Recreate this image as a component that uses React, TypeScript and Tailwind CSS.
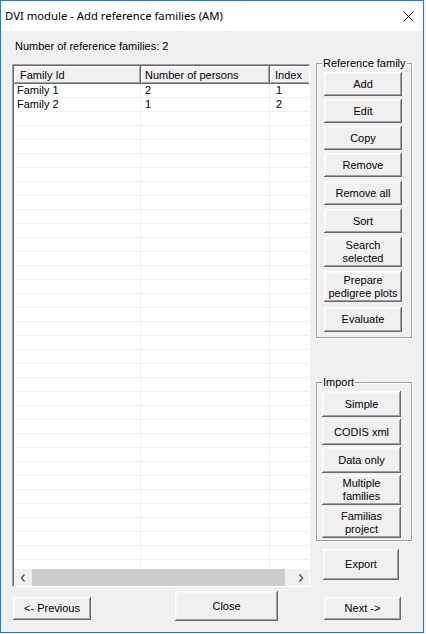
import type { ReactNode } from 'react';

const families = [
  { id: 'Family 1', persons: '2', index: '1' },
  { id: 'Family 2', persons: '1', index: '2' },
];

const emptyRows = Array.from({ length: 34 }, (_, i) => i);

const raised =
  'shadow-[inset_-1px_-1px_0_#696969,inset_1px_1px_0_#ffffff,inset_-2px_-2px_0_#a0a0a0,inset_2px_2px_0_#f7f7f7]';

function Btn({ children, className = '' }: { children: ReactNode; className?: string }) {
  return (
    <button
      type="button"
      className={`flex flex-col items-center justify-center bg-[#f0f0f0] text-[11px] leading-[13px] text-black ${raised} ${className}`}
    >
      {children}
    </button>
  );
}

function GroupBox({ label, children, className = '' }: { label: string; children: ReactNode; className?: string }) {
  return (
    <div
      className={`relative w-[96px] border border-[#a0a0a0] shadow-[1px_1px_0_#ffffff,inset_1px_1px_0_#ffffff] ${className}`}
    >
      <span className="absolute left-[5px] top-[-7px] bg-[#f0f0f0] px-px text-[11px] leading-[13px] text-black">
        {label}
      </span>
      {children}
    </div>
  );
}

function Chevron({ dir }: { dir: 'left' | 'right' }) {
  return (
    <svg width="6" height="8" viewBox="0 0 6 8" aria-hidden="true">
      <path
        d={dir === 'left' ? 'M4.5 0.5 L1.5 4 L4.5 7.5' : 'M1.5 0.5 L4.5 4 L1.5 7.5'}
        fill="none"
        stroke="#606060"
        strokeWidth="1.6"
      />
    </svg>
  );
}

function FamilyList() {
  return (
    <div className="flex h-[523px] w-[298px] flex-col border-b border-l border-r border-t border-b-white border-l-[#a0a0a0] border-r-white border-t-[#a0a0a0] bg-white shadow-[inset_1px_1px_0_#696969]">
      <div className="ml-px mt-px flex h-[18px] flex-none overflow-hidden">
        <div className={`flex w-[127px] flex-none items-center bg-[#f0f0f0] pl-[6px] ${raised}`}>Family Id</div>
        <div className={`flex w-[129px] flex-none items-center bg-[#f0f0f0] pl-[4px] ${raised}`}>Number of persons</div>
        <div className={`flex w-[60px] flex-none items-center bg-[#f0f0f0] pl-[5px] ${raised}`}>Index</div>
      </div>
      <div className="ml-px flex-1 overflow-hidden">
        {families.map((f) => (
          <div key={f.id} className="flex h-[14px] border-b border-[#f0f0f0] leading-[13px]">
            <div className="w-[127px] flex-none border-r border-[#f0f0f0] pl-[3px]">{f.id}</div>
            <div className="w-[129px] flex-none border-r border-[#f0f0f0] pl-[4px]">{f.persons}</div>
            <div className="w-[60px] flex-none pl-[6px]">{f.index}</div>
          </div>
        ))}
        {emptyRows.map((i) => (
          <div key={i} className="flex h-[14px] border-b border-[#f0f0f0]">
            <div className="w-[127px] flex-none border-r border-[#f0f0f0]" />
            <div className="w-[129px] flex-none border-r border-[#f0f0f0]" />
            <div className="w-[60px] flex-none" />
          </div>
        ))}
      </div>
      <div className="ml-px flex h-[17px] flex-none items-center bg-[#f0f0f0]">
        <div className="flex w-[17px] flex-none justify-center">
          <Chevron dir="left" />
        </div>
        <div className="flex h-full flex-1 items-stretch">
          <div className="ml-px w-[253px] bg-[#cdcdcd]" />
        </div>
        <div className="flex w-[17px] flex-none justify-center">
          <Chevron dir="right" />
        </div>
      </div>
    </div>
  );
}

export default function App() {
  return (
    <div className="h-[634px] w-[426px] bg-[#f0f0f0] font-['Liberation_Sans',Arial,sans-serif] text-[11px] text-black">
      <div className="flex h-[633px] w-[424px] flex-col border border-[#1a7fd4]">
        <header className="flex h-[30px] flex-none items-center justify-between bg-white pl-[4px] pr-[9px]">
          <span className="font-['Noto_Sans',sans-serif] text-[11.3px] leading-none text-black">
            DVI module - Add reference families (AM)
          </span>
          <svg width="11" height="11" viewBox="0 0 11 11" aria-hidden="true">
            <path d="M0.5 0.5 L10.5 10.5 M10.5 0.5 L0.5 10.5" stroke="#000" strokeWidth="1" />
          </svg>
        </header>

        <main className="flex flex-1 flex-col bg-[#f0f0f0]">
          <div className="flex">
            <div className="ml-[11px] flex flex-col">
              <p className="mt-[9px] pl-[3px] leading-[13px]">Number of reference families: 2</p>
              <div className="mt-[11px]">
                <FamilyList />
              </div>
            </div>

            <div className="ml-[6px] flex flex-col">
              <GroupBox label="Reference family" className="mt-[32px] h-[275px]">
                <div className="flex flex-col gap-[3px] pl-[7px] pt-[8px]">
                  <Btn className="h-[24px] w-[78px]">Add</Btn>
                  <Btn className="h-[24px] w-[78px]">Edit</Btn>
                  <Btn className="h-[24px] w-[78px]">Copy</Btn>
                  <Btn className="h-[24px] w-[78px]">Remove</Btn>
                  <Btn className="mt-px h-[24px] w-[78px]">Remove all</Btn>
                  <Btn className="mt-px h-[24px] w-[78px]">Sort</Btn>
                  <Btn className="mt-px h-[30px] w-[78px]">
                    <span>Search</span>
                    <span>selected</span>
                  </Btn>
                  <Btn className="mt-px h-[31px] w-[78px]">
                    <span>Prepare</span>
                    <span>pedigree plots</span>
                  </Btn>
                  <Btn className="mt-[2px] h-[25px] w-[78px]">Evaluate</Btn>
                </div>
              </GroupBox>

              <GroupBox label="Import" className="mt-[44px] h-[159px]">
                <div className="flex flex-col gap-[2px] pl-[5px] pt-[8px]">
                  <Btn className="h-[26px] w-[79px]">Simple</Btn>
                  <Btn className="h-[26px] w-[79px]">CODIS xml</Btn>
                  <Btn className="h-[26px] w-[79px]">Data only</Btn>
                  <Btn className="h-[30px] w-[79px]">
                    <span>Multiple</span>
                    <span>families</span>
                  </Btn>
                  <Btn className="h-[31px] w-[79px]">
                    <span>Familias</span>
                    <span>project</span>
                  </Btn>
                </div>
              </GroupBox>

              <Btn className="ml-[7px] mt-[8px] h-[31px] w-[76px]">Export</Btn>
            </div>
          </div>

          <div className="flex items-start">
            <Btn className="ml-[12px] mt-[10px] h-[23px] w-[78px]">&lt;- Previous</Btn>
            <Btn className="ml-[84px] mt-[4px] h-[30px] w-[103px]">Close</Btn>
            <Btn className="ml-[46px] mt-[10px] h-[23px] w-[77px]">Next -&gt;</Btn>
          </div>
        </main>
      </div>
    </div>
  );
}
